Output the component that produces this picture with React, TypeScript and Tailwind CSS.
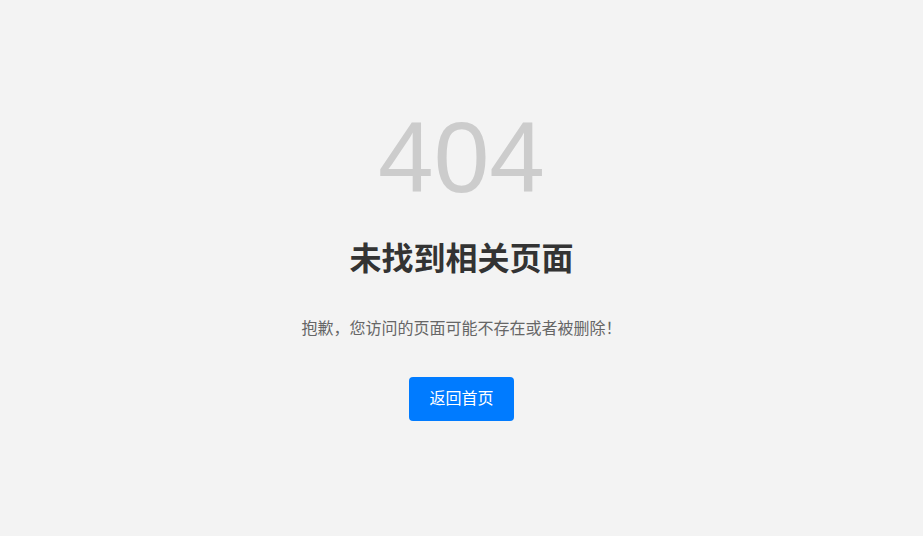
export default function App() {
	return (
		<main className="flex h-screen w-full flex-col items-center justify-center bg-[#f3f3f3] pb-[9px] font-['Liberation_Sans','Noto_Sans_CJK_SC',sans-serif]">
			<div className="text-[100px] leading-none text-[#cccccc]">404</div>
			<h1 className="mt-[28px] text-[32px] leading-[48px] font-bold text-[#333333]">
				未找到相关页面
			</h1>
			<p className="mt-[34px] text-base leading-6 text-[#666666]">
				抱歉，您访问的页面可能不存在或者被删除！
			</p>
			<button className="mt-[36px] h-[44px] rounded-[4px] bg-[#007bff] px-5 text-base text-white">
				返回首页
			</button>
		</main>
	);
}
